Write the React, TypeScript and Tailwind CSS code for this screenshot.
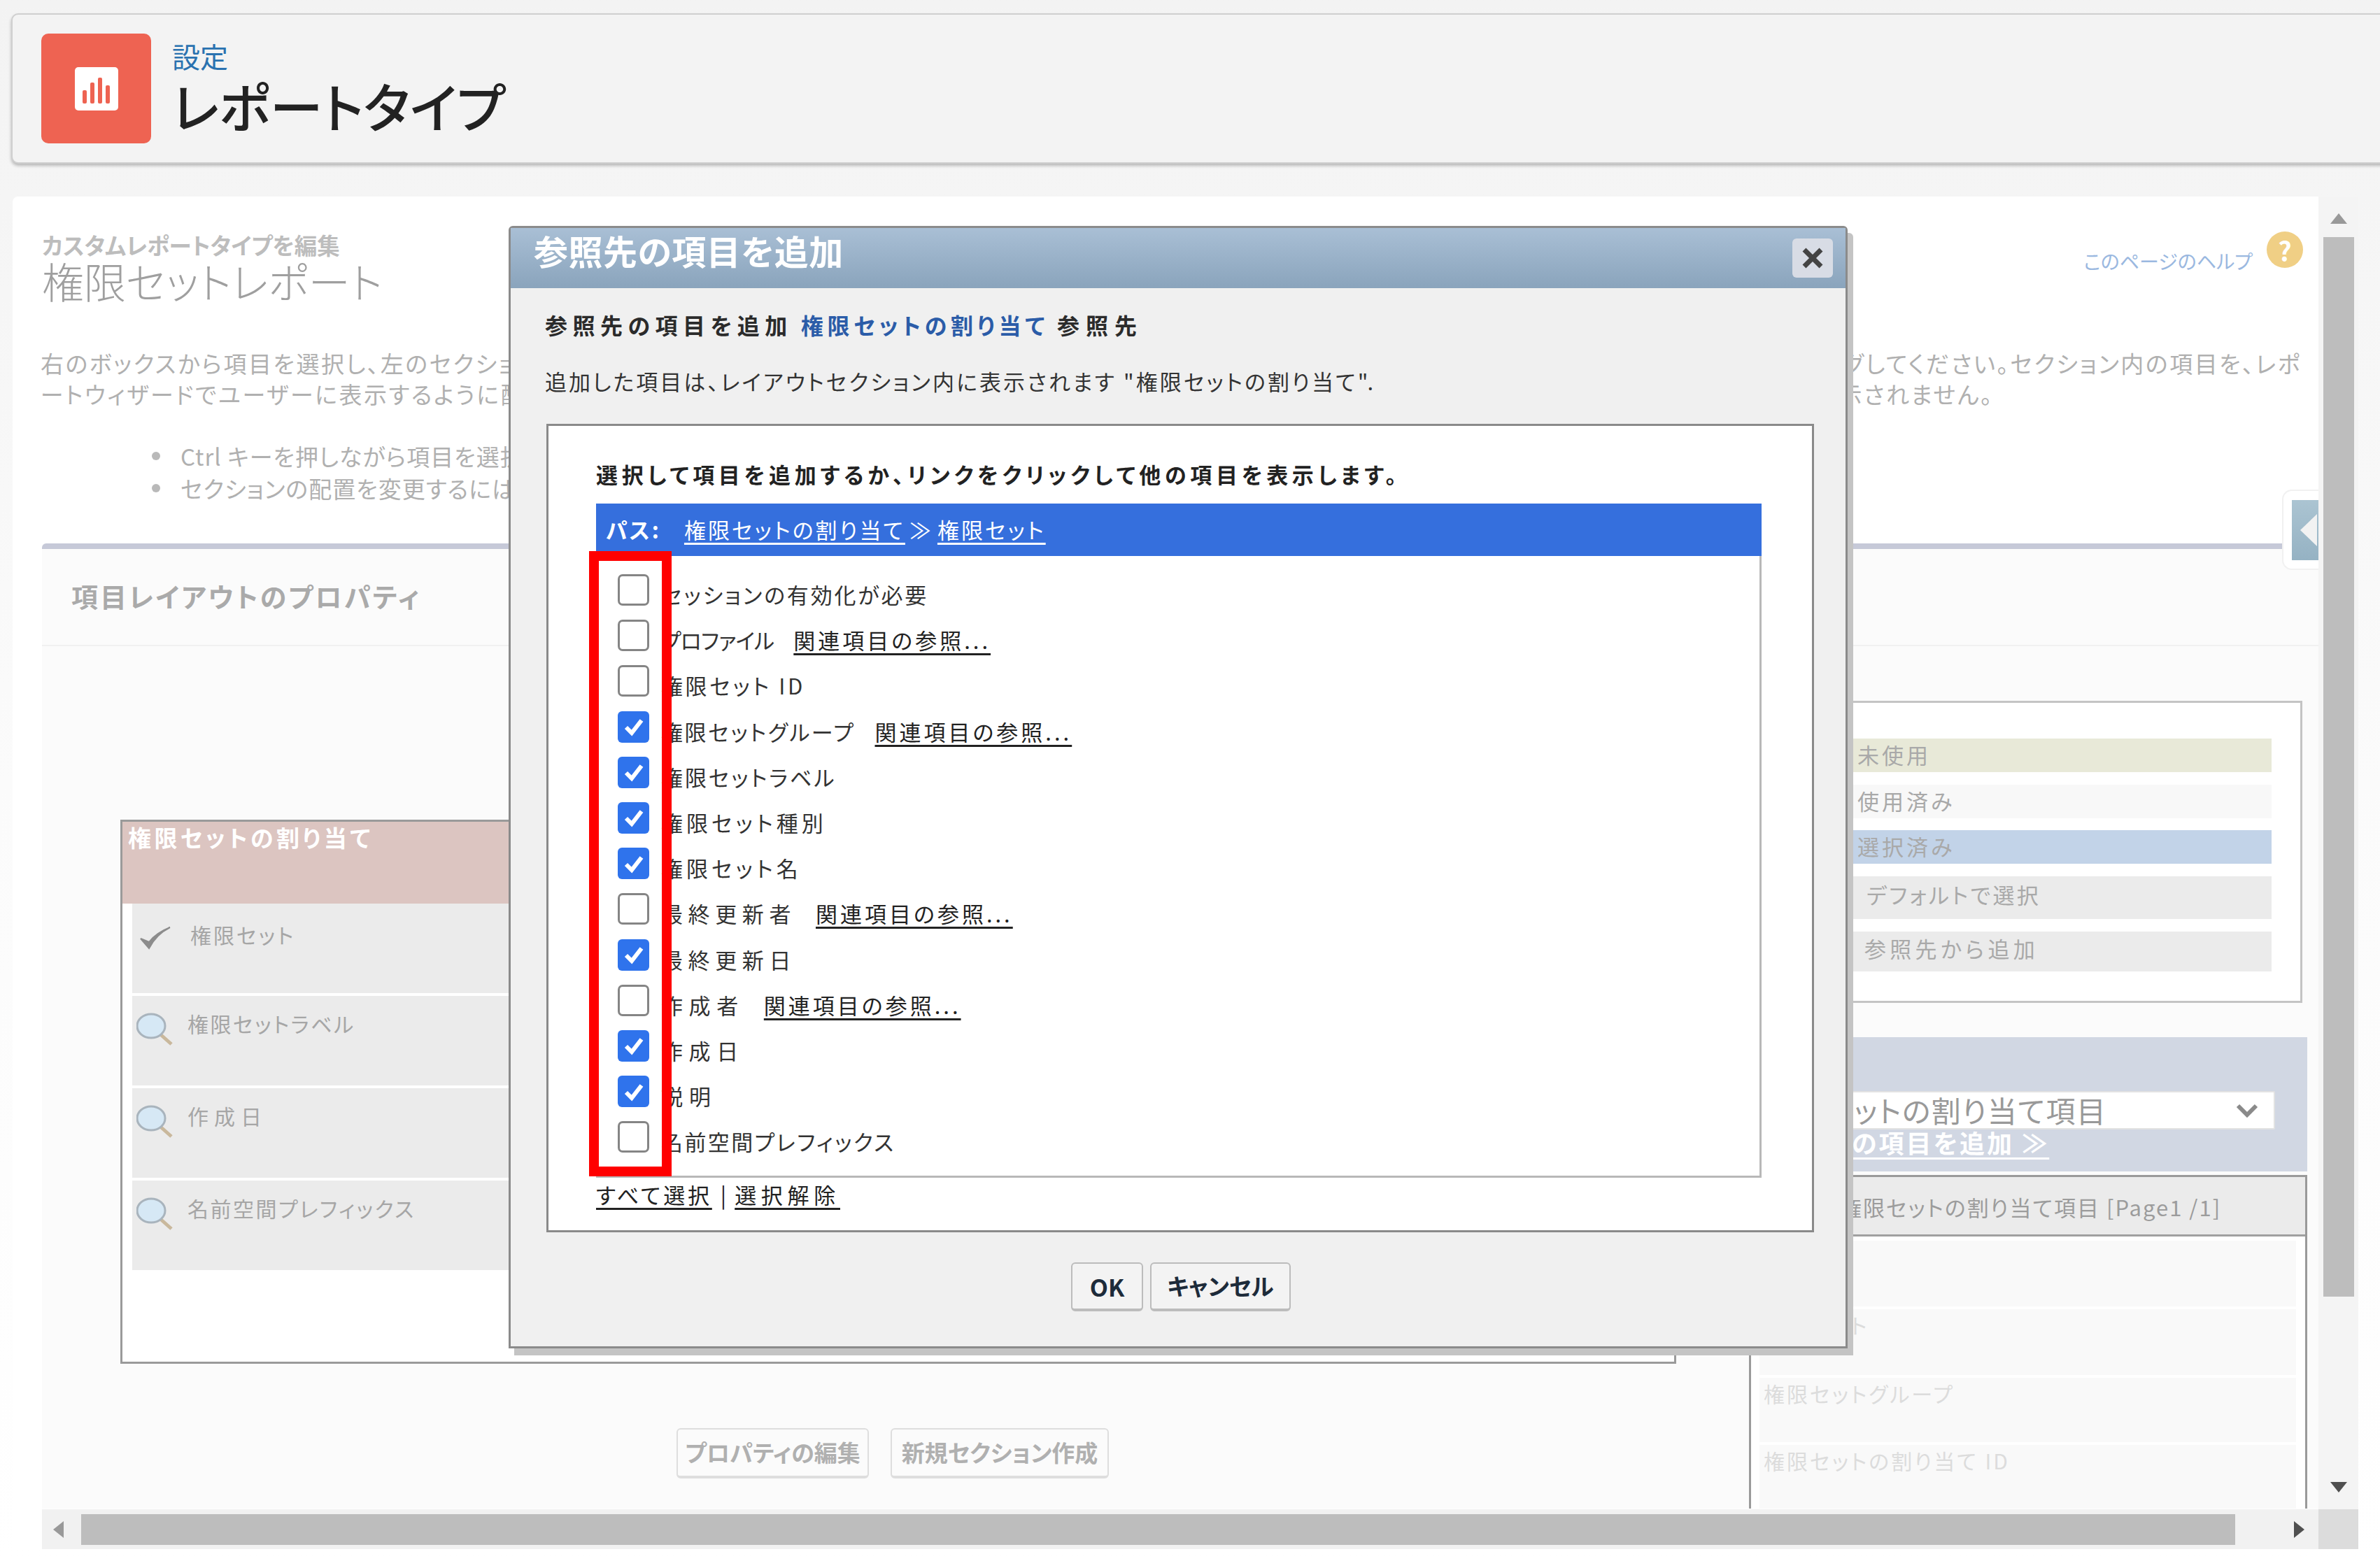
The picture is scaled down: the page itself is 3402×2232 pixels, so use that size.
const fieldRows = [
  { label: "セッションの有効化が必要", checked: false, link: false, spacing: "tracking-[2.8px]" },
  { label: "プロファイル", checked: false, link: true, spacing: "tracking-[-0.8px]" },
  { label: "権限セット ID", checked: false, link: false, spacing: "tracking-[3.6px]" },
  { label: "権限セットグループ", checked: true, link: true, spacing: "tracking-[2.6px]" },
  { label: "権限セットラベル", checked: true, link: false, spacing: "tracking-[2.9px]" },
  { label: "権限セット種別", checked: true, link: false, spacing: "tracking-[5px]" },
  { label: "権限セット名", checked: true, link: false, spacing: "tracking-[5px]" },
  { label: "最終更新者", checked: false, link: true, spacing: "tracking-[7.6px]" },
  { label: "最終更新日", checked: true, link: false, spacing: "tracking-[7.6px]" },
  { label: "作成者", checked: false, link: true, spacing: "tracking-[8.6px]" },
  { label: "作成日", checked: true, link: false, spacing: "tracking-[8.6px]" },
  { label: "説明", checked: true, link: false, spacing: "tracking-[9px]" },
  { label: "名前空間プレフィックス", checked: false, link: false, spacing: "tracking-[2.4px]" },
];

const sectionRows = [
  { label: "権限セット", check: true, spacing: "tracking-[3px]" },
  { label: "権限セットラベル", check: false, spacing: "tracking-[2.5px]" },
  { label: "作成日", check: false, spacing: "tracking-[8px]" },
  { label: "名前空間プレフィックス", check: false, spacing: "tracking-[2.5px]" },
];

function ReportIcon() {
  return (
    <div className="flex h-[157px] w-[157px] shrink-0 items-center justify-center rounded-[10px] bg-[#ee6352]">
      <svg width="62" height="62" viewBox="0 0 62 62">
        <rect width="62" height="62" rx="5" fill="#fff" />
        <rect x="11" y="33" width="6" height="19" rx="2" fill="#ee6352" />
        <rect x="22" y="22" width="6" height="30" rx="2" fill="#ee6352" />
        <rect x="33" y="15" width="6" height="37" rx="2" fill="#ee6352" />
        <rect x="44" y="26" width="6" height="26" rx="2" fill="#ee6352" />
      </svg>
    </div>
  );
}

function Magnifier() {
  return (
    <svg width="54" height="54" viewBox="0 0 54 54" className="shrink-0">
      <line x1="32" y1="31" x2="50" y2="47" stroke="#c9b89c" strokeWidth="5" />
      <ellipse cx="21" cy="21" rx="20" ry="17" fill="#d6e8f5" stroke="#a9b4bd" strokeWidth="3" />
    </svg>
  );
}

function CheckMark() {
  return (
    <svg width="54" height="54" viewBox="0 0 54 54" className="shrink-0">
      <path d="M6 28 L18 42 Q28 22 48 12 Q28 20 18 33 Z" fill="#8c8c8c" stroke="#8c8c8c" strokeWidth="2" />
    </svg>
  );
}

function Arrow({ dir }: { dir: "up" | "down" | "left" | "right" }) {
  const points = {
    up: "0,15 12,0 24,15",
    down: "0,0 24,0 12,15",
    left: "15,0 15,24 0,12",
    right: "0,0 0,24 15,12",
  }[dir];
  const color = dir === "down" || dir === "right" ? "#505050" : "#999999";
  return (
    <svg width="24" height="24" viewBox="0 0 24 24" className="shrink-0">
      <polygon points={points} fill={color} />
    </svg>
  );
}

function CheckBox({ checked }: { checked: boolean }) {
  if (checked) {
    return (
      <span className="flex h-[45px] w-[45px] shrink-0 items-center justify-center rounded-[6px] bg-[#2f73ec]">
        <svg width="30" height="30" viewBox="0 0 30 30">
          <path d="M4 16 L12 24 L26 6" fill="none" stroke="#fff" strokeWidth="6" />
        </svg>
      </span>
    );
  }
  return <span className="h-[45px] w-[45px] shrink-0 rounded-[7px] border-[3px] border-[#858585] bg-white" />;
}

function ModalDialog() {
  return (
    <div className="absolute left-[727px] top-[323px] flex h-[1605px] w-[1914px] flex-col rounded-t-[6px] border-[3px] border-[#8b8b8b] bg-[#f0f0f0] shadow-[8px_10px_0_#c4c4c4]">
      <div className="flex h-[86px] shrink-0 items-start justify-between bg-gradient-to-b from-[#a9bfd5] to-[#8aa4bc] pl-[33px] pr-[18px] pt-[4px]">
        <span className="text-[49px] font-bold leading-[56px] tracking-[0.5px] text-white">参照先の項目を追加</span>
        <span className="mt-[11px] flex h-[56px] w-[58px] items-center justify-center rounded-[6px] bg-[#d8dce5]">
          <svg width="30" height="30" viewBox="0 0 30 30">
            <path d="M3 3 L27 27 M27 3 L3 27" stroke="#444" strokeWidth="7" />
          </svg>
        </span>
      </div>

      <div className="mt-[32px] pl-[49px] text-[32px] font-bold leading-[40px] text-[#2b2b2b]">
        <span className="tracking-[7.5px]">参照先の項目を追加</span>
        <span className="ml-[12px] tracking-[5.7px] text-[#2b5ca8]">権限セットの割り当て</span>
        <span className="ml-[12px] tracking-[9px]">参照先</span>
      </div>
      <div className="mt-[41px] pl-[49px] text-[31px] leading-[40px] tracking-[3.1px] text-[#333]">
        追加した項目は、レイアウトセクション内に表示されます "権限セットの割り当て".
      </div>

      <div className="ml-[51px] mt-[41px] h-[1156px] w-[1812px] border-[3px] border-[#8a8a8a] bg-white pl-[68px] pt-[49px]">
        <div className="text-[31px] font-bold leading-[40px] tracking-[5.7px] text-[#222]">
          選択して項目を追加するか、リンクをクリックして他の項目を表示します。
        </div>
        <div className="mt-[22px] flex h-[75px] w-[1666px] items-center bg-[#356fdd] pl-[14px] text-[31px] tracking-[3px] text-white">
          <span className="mr-[33px] font-bold">パス:</span>
          <span className="underline underline-offset-[6px]">権限セットの割り当て</span>
          <span className="mx-[6px]">≫</span>
          <span className="underline underline-offset-[6px]">権限セット</span>
        </div>
        <div className="h-[889px] w-[1666px] border-x-[3px] border-b-[3px] border-[#b8b8b8] pt-[26px]">
          {fieldRows.map((row) => (
            <div key={row.label} className="flex h-[65.2px] items-start pl-[28px]">
              <CheckBox checked={row.checked} />
              <span className={`ml-[17px] mt-[9px] whitespace-nowrap text-[31px] leading-[40px] text-[#333] ${row.spacing}`}>
                {row.label}
              </span>
              {row.link && (
                <span className="ml-[28px] mt-[9px] whitespace-nowrap text-[31px] leading-[40px] tracking-[4px] text-[#222] underline underline-offset-[6px]">
                  関連項目の参照...
                </span>
              )}
            </div>
          ))}
        </div>
        <div className="mt-[4px] flex h-[40px] items-center text-[31px] text-[#222]">
          <span className="tracking-[3.8px] underline underline-offset-[6px]">すべて選択</span>
          <span className="mx-[12px]">|</span>
          <span className="tracking-[6.7px] underline underline-offset-[6px]">選択解除</span>
        </div>
      </div>

      <div className="mt-[43px] flex justify-center gap-[10px] pl-[8px]">
        <button className="h-[70px] w-[103px] rounded-[6px] border-2 border-b-4 border-[#bcbcbc] bg-[#f3f3f3] text-[34px] font-bold text-[#1d2b3a]">
          OK
        </button>
        <button className="h-[70px] w-[201px] rounded-[6px] border-2 border-b-4 border-[#bcbcbc] bg-[#f3f3f3] text-[33px] font-bold text-[#1d2b3a]">
          キャンセル
        </button>
      </div>
    </div>
  );
}

function SectionBox() {
  return (
    <div className="h-[778px] w-[2224px] border-[3px] border-[#9a9a9a] bg-white">
      <div className="h-[117px] bg-[#dcc5c1] pl-[8px] pt-[2px] text-[33px] font-bold leading-[40px] tracking-[4.4px] text-white">
        権限セットの割り当て
      </div>
      <div className="flex flex-col gap-[4px] pl-[14px] pr-[14px]">
        {sectionRows.map((row) => (
          <div key={row.label} className="flex h-[128px] items-start bg-[#ebebeb] pl-[6px] pt-[22px]">
            {row.check ? <CheckMark /> : <Magnifier />}
            <span className={`${row.check ? "ml-[23px] mt-[2px]" : "ml-[19px] -mt-[3px]"} whitespace-nowrap text-[30px] leading-[40px] text-[#a6a6a6] ${row.spacing}`}>
              {row.label}
            </span>
          </div>
        ))}
      </div>
    </div>
  );
}

function LegendBox() {
  return (
    <div className="flex h-[432px] w-[791px] flex-col border-[3px] border-[#c4c4c4] bg-white pl-[10px] pt-[51px] text-[31px] tracking-[4px] text-[#a9a9a9]">
      <div className="flex h-[48px] w-[734px] items-center bg-[#e8e9d8] pb-[2px] pl-[142px]">未使用</div>
      <div className="mt-[18px] flex h-[48px] w-[734px] items-center bg-[#f8f8f8] pb-[2px] pl-[142px]">使用済み</div>
      <div className="mt-[17px] flex h-[48px] w-[734px] items-center bg-[#c2d3e8] pb-[2px] pl-[142px]">選択済み</div>
      <div className="mt-[18px] flex h-[61px] w-[734px] items-center bg-[#ebebeb] pb-[8px] pl-[155px] tracking-[3.3px]">デフォルトで選択</div>
      <div className="mt-[18px] flex h-[57px] w-[734px] items-center bg-[#ebebeb] pb-[8px] pl-[152px] tracking-[5.3px]">参照先から追加</div>
    </div>
  );
}

function FieldPicker() {
  return (
    <div className="mt-[49px] h-[192px] w-[798px] bg-[#d1d7e3] pt-[77px]">
      <div className="relative h-[55px] w-[752px] whitespace-nowrap rounded-[2px] border-2 border-[#e2e2e2] bg-white pl-[20px] text-[42px] leading-[50px] tracking-[1.5px] text-[#999]">
        権限セットの割り当て項目
        <svg className="absolute right-[22px] top-[14px]" width="32" height="24" viewBox="0 0 32 24">
          <path d="M3 5 L16 18 L29 5" fill="none" stroke="#8a8a8a" strokeWidth="6" />
        </svg>
      </div>
      <div className="-ml-[35px] -mt-[4px] whitespace-nowrap text-[36px] font-bold leading-[44px] tracking-[3px] text-white underline underline-offset-[6px]">
        権限セットの項目を追加 ≫
      </div>
    </div>
  );
}

function FieldList() {
  return (
    <div className="mt-[5px] flex-1 border-x-[3px] border-t-[3px] border-x-[#9a9a9a] border-t-[#9a9a9a] bg-white">
      <div className="flex h-[85px] items-center whitespace-nowrap border-b-[3px] border-[#a0a0a0] bg-[#ebebeb] pl-[127px] pt-[4px] text-[31px] tracking-[2px] text-[#9c9c9c]">
        権限セットの割り当て項目 [Page1 /1]
      </div>
      <div className="flex flex-col gap-[4px] pl-[12px] pr-[13px] pt-[6px] text-[30px] tracking-[3px] text-[#dcdcdc]">
        <div className="h-[94px] bg-[#f9f9f9]" />
        <div className="h-[94px] bg-[#f9f9f9] pl-[6px]">権限セット</div>
        <div className="h-[92px] bg-[#f9f9f9] pl-[6px]">権限セットグループ</div>
        <div className="h-[92px] bg-[#f9f9f9] pl-[6px]">権限セットの割り当て ID</div>
      </div>
    </div>
  );
}

function PropertiesPanel() {
  return (
    <div className="mt-[56px] flex h-[1380px] flex-col overflow-hidden rounded-t-[6px] border-t-[8px] border-[#c6c9d8] bg-[#fbfbfb]">
      <div className="flex h-[139px] shrink-0 items-center border-b-2 border-[#f1f1f1] pb-[4px] pl-[42px] text-[38px] font-bold tracking-[3px] text-[#aaaaaa]">
        項目レイアウトのプロパティ
      </div>
      <div className="flex flex-1">
        <div className="ml-[112px] flex w-[2224px] shrink-0 flex-col pt-[248px]">
          <SectionBox />
          <div className="mt-[92px] flex gap-[31px] pl-[795px]">
            <button className="h-[72px] w-[275px] rounded-[6px] border-2 border-b-4 border-[#dedede] text-[33px] font-bold text-[#b0b0b0]">
              プロパティの編集
            </button>
            <button className="h-[72px] w-[312px] rounded-[6px] border-2 border-b-4 border-[#dedede] text-[33px] font-bold text-[#b0b0b0]">
              新規セクション作成
            </button>
          </div>
        </div>
        <div className="ml-[104px] flex w-[798px] shrink-0 flex-col pt-[78px]">
          <LegendBox />
          <FieldPicker />
          <FieldList />
        </div>
      </div>
    </div>
  );
}

export default function App() {
  return (
    <div className="relative h-[2232px] w-[3402px] overflow-hidden bg-gradient-to-b from-[#f3f3f3] via-[#fbfbfb] to-white pt-[19px] font-['Noto_Sans_CJK_JP',sans-serif] [font-feature-settings:'palt']">
      {/* page header */}
      <div className="ml-[16px] flex h-[215px] w-[3420px] items-center gap-[30px] rounded-[10px] border-2 border-[#cfcfcf] bg-[#f3f3f3] pl-[41px] shadow-[0_3px_4px_rgba(0,0,0,0.25)]">
        <ReportIcon />
        <div className="-mt-[6px] flex flex-col">
          <span className="text-[40px] leading-[52px] text-[#2a72b0]">設定</span>
          <span className="text-[76px] font-medium leading-[88px] text-[#222]">レポートタイプ</span>
        </div>
      </div>

      {/* dimmed page under the dialog */}
      <div className="ml-[18px] mt-[47px] flex h-[1934px] w-[3353px] rounded-[8px] bg-white">
        <div className="flex w-[3296px] shrink-0 flex-col">
          <div className="h-[1877px] overflow-hidden pl-[42px]">
            <div className="flex h-[152px] items-start justify-between pr-[22px] pt-[50px]">
              <div className="flex flex-col">
                <span className="text-[32.5px] font-bold leading-[38px] text-[#bdbdbd]">カスタムレポートタイプを編集</span>
                <span className="text-[60px] font-light leading-[64px] text-[#9f9f9f]">権限セットレポート</span>
              </div>
              <div className="flex items-start">
                <span className="mt-[22px] text-[28px] leading-[40px] text-[#9ab8e0]">このページのヘルプ</span>
                <span className="ml-[20px] flex h-[52px] w-[52px] items-center justify-center rounded-full bg-[#f0cf85] text-[38px] font-bold text-white">?</span>
              </div>
            </div>
            <div className="mt-[64px] text-[33px] leading-[44px] tracking-[2.5px] text-[#b0b0b0]">
              <div className="flex justify-between whitespace-nowrap pr-[24px]">
                <span className="-ml-[2px]">右のボックスから項目を選択し、左のセクション</span>
                <span>にドラッグしてください。セクション内の項目を、レポ</span>
              </div>
              <div className="flex justify-between whitespace-nowrap pr-[464px]">
                <span className="-ml-[2px]">ートウィザードでユーザーに表示するように配置します。</span>
                <span>表示されません。</span>
              </div>
            </div>
            <ul className="mt-[44px] pl-[157px] text-[33px] leading-[46px] tracking-[1px] text-[#b0b0b0]">
              <li className="flex items-center gap-[29px] whitespace-nowrap">
                <span className="h-[12px] w-[12px] shrink-0 rounded-full bg-[#b9b9b9]" />
                Ctrl キーを押しながら項目を選択します。
              </li>
              <li className="flex items-center gap-[29px] whitespace-nowrap">
                <span className="h-[12px] w-[12px] shrink-0 rounded-full bg-[#b9b9b9]" />
                セクションの配置を変更するには
              </li>
            </ul>
            <PropertiesPanel />
          </div>
          <div className="ml-[42px] flex h-[57px] items-center bg-[#f1f1f1]">
            <span className="flex w-[44px] shrink-0 pl-[16px]">
              <Arrow dir="left" />
            </span>
            <div className="ml-[12px] h-[44px] w-[3079px] shrink-0 bg-[#bdbdbd]" />
            <span className="ml-[84px]">
              <Arrow dir="right" />
            </span>
          </div>
        </div>
        <div className="flex w-[57px] shrink-0 flex-col items-center bg-[#f4f4f4]">
          <span className="mt-[24px] h-[34px]">
            <Arrow dir="up" />
          </span>
          <div className="h-[1515px] w-[44px] bg-[#bdbdbd]" />
          <span className="mt-[265px]">
            <Arrow dir="down" />
          </span>
          <div className="mt-auto h-[57px] w-[57px] bg-[#dcdcdc]" />
        </div>
      </div>

      {/* collapse tab on the right edge */}
      <div className="absolute left-[3262px] top-[700px] flex h-[115px] w-[52px] items-center rounded-l-[14px] border-2 border-r-0 border-[#f1f1f1] bg-white pl-[12px]">
        <div className="flex h-[86px] w-[38px] items-center bg-gradient-to-b from-[#abc4d2] to-[#95b2c3]">
          <svg width="24" height="46" viewBox="0 0 24 46" className="ml-[12px]">
            <polygon points="24,0 24,46 0,23" fill="#f2f2f2" />
          </svg>
        </div>
      </div>

      <ModalDialog />

      {/* red highlight around the check boxes */}
      <div className="absolute left-[842px] top-[788px] h-[894px] w-[118px] border-[14px] border-[#ff0000]" />
    </div>
  );
}
